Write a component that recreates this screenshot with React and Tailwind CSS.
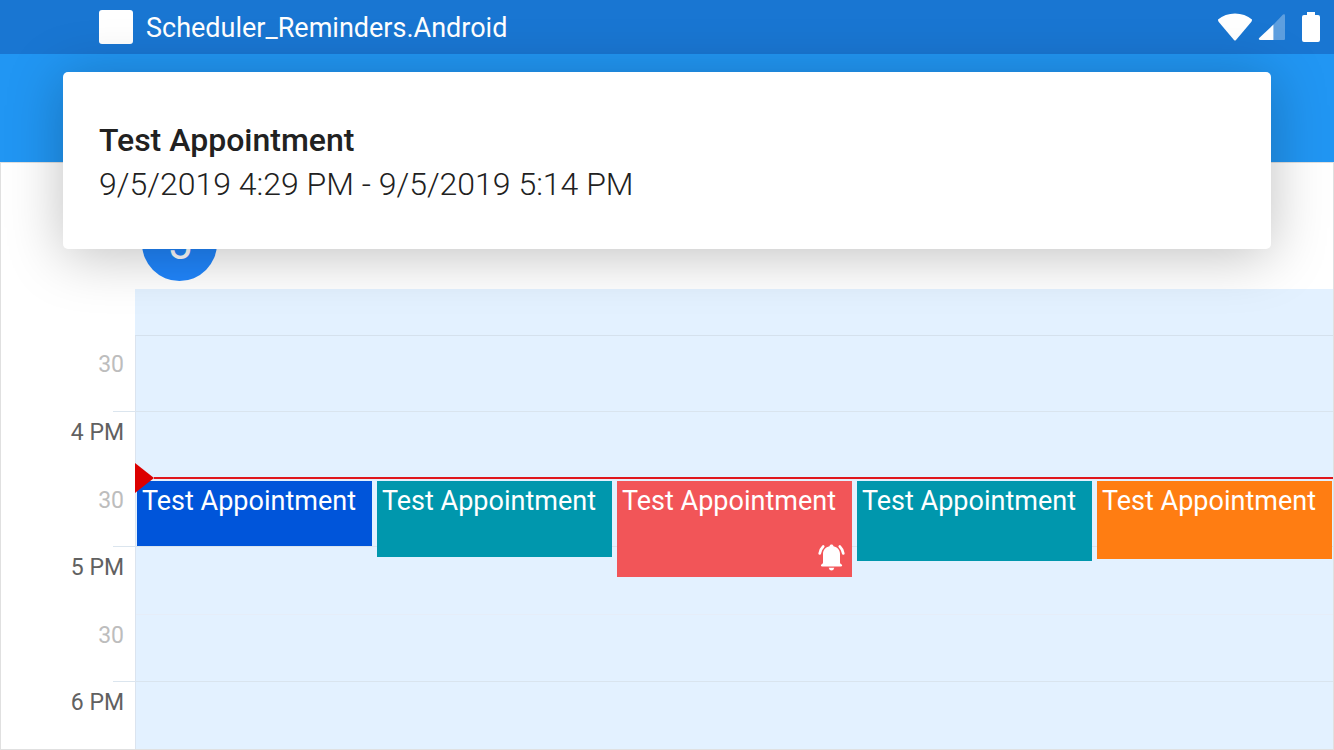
const hours = [
  { label: "4 PM", half: true },
  { label: "5 PM", half: true },
  { label: "6 PM", half: false },
];

const appointments = [
  { color: "bg-[#0055da]", height: "h-[65px]" },
  { color: "bg-[#0097ad]", height: "h-[76px]" },
  { color: "bg-[#f25558]", height: "h-[96px]", reminder: true },
  { color: "bg-[#0097ad]", height: "h-[80px]" },
  { color: "bg-[#ff7d12]", height: "h-[78px]" },
];

function WifiIcon() {
  return (
    <svg className="w-[36px] h-[28px]" viewBox="0 0 36 28" fill="#fff">
      <path d="M1 6.5C5.5 2.5 11.5 0.5 18 0.5S30.500 2.5 35 6.500Q35 8 34.200 9L19 27Q18 28 17 27L1.800 9Q1 8 1 6.500Z" />
    </svg>
  );
}

function SignalIcon() {
  return (
    <svg className="w-[28px] h-[28px]" viewBox="0 0 28 28" fill="#fff">
      <path opacity="0.3" d="M15.500 11.500L25 1.500Q27 0.500 27 2.500V25.500Q27 27 26 27H15.500Z" />
      <path d="M15.500 11.500V27H2Q0 26.500 1.200 25Z" />
    </svg>
  );
}

function BatteryIcon() {
  return (
    <svg className="w-[18px] h-[30px]" viewBox="0 0 18 30" fill="#fff">
      <path d="M5 0H13V3H16Q18 3 18 5V28Q18 30 16 30H2Q0 30 0 28V5Q0 3 2 3H5Z" />
    </svg>
  );
}

function BellIcon() {
  return (
    <svg className="w-[28px] h-[28px]" viewBox="0 0 28 28" fill="#fff">
      <path d="M14.500 1.500C15.500 1.500 16.300 2.200 16.500 3.200C20.500 4 23 7 23 11V19.500Q23 20.500 24 21Q25.200 21.700 25.200 22.500Q25 23.600 23.800 23.600H5.200Q4 23.600 3.900 22.500Q3.900 21.700 5 21Q6 20.500 6 19.500V11C6 7 8.500 4 12.500 3.200C12.700 2.200 13.500 1.500 14.500 1.500Z" />
      <path d="M11.700 24.700H17.300Q16.700 27.500 14.500 27.500T11.700 24.700Z" />
      <path d="M6.200 3.500Q3.500 6 2.700 10.500" fill="none" stroke="#fff" strokeWidth="2.700" strokeLinecap="round" />
      <path d="M22.800 3.500Q25.500 6 26.300 10.500" fill="none" stroke="#fff" strokeWidth="2.700" strokeLinecap="round" />
    </svg>
  );
}

function StatusBar() {
  return (
    <div className="flex items-center h-[54px] pl-[99px] pr-[14px] bg-[#1976d2] text-white">
      <div className="w-[34px] h-[34px] rounded-[3px] bg-white"></div>
      <p className="ml-[13px] pt-[2px] text-[27px] leading-[36px]">Scheduler_Reminders.Android</p>
      <div className="flex items-center ml-auto">
        <WifiIcon />
        <div className="ml-[5px]">
          <SignalIcon />
        </div>
        <div className="ml-4">
          <BatteryIcon />
        </div>
      </div>
    </div>
  );
}

function Notification() {
  return (
    <div
      role="alert"
      className="absolute inset-x-[63px] top-[72px] rounded-[5px] bg-white px-9 pt-[46px] pb-[43px] text-[#212121] text-[32px] leading-[44px] shadow-[0_6px_56px_rgba(0,0,0,0.25)]"
    >
      <p className="font-medium">Test Appointment</p>
      <p className="font-light">9/5/2019 4:29 PM - 9/5/2019 5:14 PM</p>
    </div>
  );
}

function TimeRuler() {
  return (
    <div className="w-[134px] text-right text-[23px] leading-[42px]">
      <div className="h-[122px] pt-[55px] pr-[11px] text-[#bdbdbd]">30</div>
      {hours.map((h) => {
        return (
          <div key={h.label}>
            <div className="h-[68px]">
              <div className="h-px w-[22px] ml-auto bg-[#dbe5ee]"></div>
              <p className="pr-[11px] text-[#616161]">{h.label}</p>
            </div>
            {h.half && <div className="h-[67px] pt-px pr-[11px] text-[#bdbdbd]">30</div>}
          </div>
        );
      })}
    </div>
  );
}

function Timeline() {
  return (
    <div className="relative flex-1 bg-[#e3f1ff]">
      <div className="h-[47px] border-b border-[#d5e1ed]"></div>
      <div className="border-l border-[#dbe4ef]">
        <div className="h-[75px]"></div>
        {hours.map((h) => {
          return (
            <div key={h.label}>
              <div className="h-[68px] border-t border-[#d9e4ee]"></div>
              {h.half && <div className="h-[67px] border-t border-[#e6edf8]"></div>}
            </div>
          );
        })}
      </div>
      <div className="absolute inset-x-0 top-[192px] flex items-start gap-[5px] pl-[2px] pr-px">
        {appointments.map((a, i) => {
          return (
            <button
              key={i}
              className={`relative flex-1 min-w-0 flex items-start pl-[5px] pt-[2px] text-white text-[27px] leading-[36px] whitespace-nowrap ${a.color} ${a.height}`}
            >
              Test Appointment
              {a.reminder && (
                <span className="absolute right-[7px] bottom-[6px]">
                  <BellIcon />
                </span>
              )}
            </button>
          );
        })}
      </div>
      {/* current time */}
      <div className="absolute inset-x-0 top-[174px] flex items-center h-[30px]">
        <svg className="w-[19px] h-[30px]" viewBox="0 0 19 30" fill="#dc0000">
          <path d="M0 0L19 15L0 30Z" />
        </svg>
        <div className="flex-1 h-[2px] bg-[#e0161c]"></div>
      </div>
    </div>
  );
}

export default function App() {
  return (
    <div className="relative flex flex-col min-h-screen bg-white font-['Roboto',sans-serif]">
      <StatusBar />
      <div className="h-[108px] bg-[#2196f3]"></div>
      <main className="flex-1 border border-[#e0e0e0]">
        <div className="h-[126px] pl-[141px] pt-[43px]">
          <div className="flex items-center justify-center w-[75px] h-[75px] rounded-full bg-[#2085fb] text-white text-[44px]">5</div>
        </div>
        <div className="flex">
          <TimeRuler />
          <Timeline />
        </div>
      </main>
      <Notification />
    </div>
  );
}
